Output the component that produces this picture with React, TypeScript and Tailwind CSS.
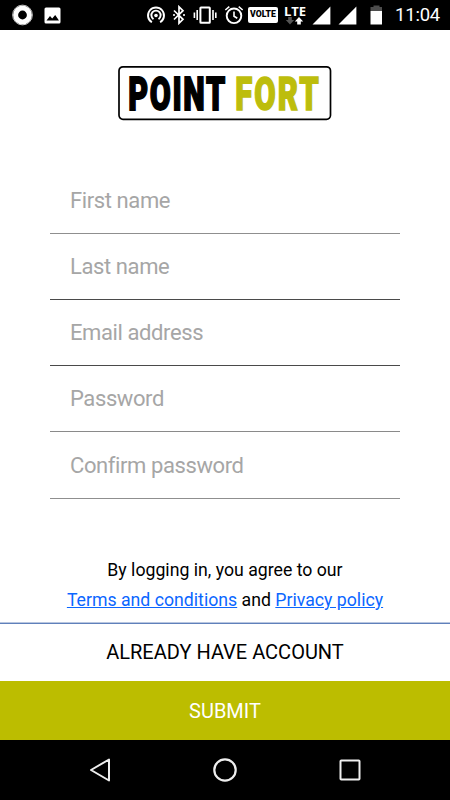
import { useState } from 'react'

const fields = [
  { name: 'firstName', label: 'First name', type: 'text', box: 'h-[66px] border-[#8f8f8f]' },
  { name: 'lastName', label: 'Last name', type: 'text', box: 'h-[66px] border-[#4a4a4a]' },
  { name: 'email', label: 'Email address', type: 'email', box: 'h-[66px] border-[#4a4a4a]' },
  { name: 'password', label: 'Password', type: 'password', box: 'h-[66px] border-[#8a8a8a]' },
  { name: 'confirm', label: 'Confirm password', type: 'password', box: 'h-[67px] border-[#8f8f8f]' }
]

function Signal() {
  return (
    <svg width="19" height="19" viewBox="0 0 19 19">
      <path d="M18.4 0.5V18.4H0.5Z" fill="#fff" />
    </svg>
  )
}

function StatusBar() {
  return (
    <div className="flex h-[30px] items-center bg-black pl-3 pr-[9px] text-white">
      <svg width="22" height="22" viewBox="0 0 22 22">
        <circle cx="10.5" cy="11" r="9.9" fill="none" stroke="#bbb" strokeWidth="1" />
        <circle cx="10.5" cy="11" r="6.9" fill="none" stroke="#fff" strokeWidth="5" />
      </svg>
      <svg className="ml-[10px]" width="17" height="17" viewBox="0 0 17 17">
        <rect x="0.5" y="0.5" width="16" height="16" rx="1.5" fill="#fff" />
        <path d="M2.5 13.5 6 9l2.2 2.6L11.2 8l3.8 5.5Z" fill="#000" />
      </svg>

      <div className="ml-auto flex items-center">
        {/* hotspot */}
        <svg width="20" height="20" viewBox="0 0 20 20" fill="none" stroke="#fff" strokeWidth="1.9">
          <path d="M5.9 17.3A8 8 0 1 1 14.1 17.3" />
          <path d="M7.5 14.1A4.6 4.6 0 1 1 12.5 14.1" />
          <circle cx="10" cy="10.5" r="1.8" fill="#fff" stroke="none" />
        </svg>
        {/* bluetooth */}
        <svg className="ml-[5px]" width="16" height="20" viewBox="0 0 16 20" fill="none" stroke="#fff" strokeWidth="1.7">
          <path d="M3 5.5 12 14.3 8 18.2V1.8l4 3.9L3 14.5" />
          <path d="M2.2 10h1.6M12.2 10h1.6" strokeWidth="2" />
        </svg>
        {/* vibrate */}
        <svg className="ml-[6px]" width="24" height="20" viewBox="0 0 24 20" fill="none" stroke="#fff" strokeWidth="2">
          <rect x="7.4" y="2.4" width="9.4" height="15.4" rx="0.6" />
          <path d="M4.2 5v10M1.4 7.5v5.5M20 5v10M22.8 7.5v5.5" strokeWidth="1.6" />
        </svg>
        {/* alarm */}
        <svg className="ml-[7px]" width="20" height="20" viewBox="0 0 20 20" fill="none" stroke="#fff" strokeWidth="1.9">
          <circle cx="10" cy="10.8" r="7.3" />
          <path d="M10 6.6v4.7l3.3 2M1.3 5 5.3 1.7M18.7 5l-4-3.3" strokeWidth="1.6" />
        </svg>
        <div className="ml-[4px] flex h-[16px] w-[30px] items-center justify-center rounded-[2px] bg-white font-[Roboto] text-[8.7px] font-black text-black">
          VOLTE
        </div>
        <div className="ml-[5px] flex h-[20px] w-[24px] flex-col items-center">
          <span className="font-['Open_Sans'] text-[13px] leading-[12px] font-bold">LTE</span>
          <svg className="shrink-0" width="20" height="8" viewBox="0 0 20 8">
            <path d="M3.2 0h3.6v3h2.4L5 7.5 0.8 3h2.4Z" fill="#555" />
            <path d="M12.2 7.5h3.6v-3h2.4L14 0 9.8 4.5h2.4Z" fill="#fff" />
          </svg>
        </div>
        <div className="ml-[5px]">
          <Signal />
        </div>
        <div className="ml-[7px]">
          <Signal />
        </div>
        <svg className="ml-[13px]" width="13" height="20" viewBox="0 0 13 20">
          <path d="M3.5 0.5h6V2H12v4H0.5V2h3Z" fill="#4d4d4d" />
          <path d="M0.5 6H12v13.5H0.5Z" fill="#fff" />
        </svg>
        <span className="ml-[12px] w-[46px] font-[Roboto] text-[18.5px] leading-none tracking-[-0.2px] whitespace-nowrap">11:04</span>
      </div>
    </div>
  )
}

function Logo() {
  return (
    <svg width="214" height="55" viewBox="0 0 214 55" className="overflow-visible" fontFamily="Roboto, sans-serif" fontWeight="900" fontSize="47">
      <rect x="1" y="0.8" width="211.5" height="52.5" rx="4" fill="#fff" stroke="#000" strokeWidth="1.7" />
      <text transform="translate(10.2 43.7) scale(0.65 1)" letterSpacing="2.5" fill="#000" stroke="#000" strokeWidth="1.8">POINT</text>
      <text transform="translate(117.2 43.7) scale(0.66 1)" letterSpacing="3.2" fill="#bdbd0c" stroke="#bdbd0c" strokeWidth="1.6">FORT</text>
    </svg>
  )
}

function NavBar() {
  return (
    <div className="flex h-[60px] items-center justify-between bg-black px-[88px]">
      <svg width="24" height="26" viewBox="0 0 24 26" fill="none" stroke="#eee" strokeWidth="2" strokeLinejoin="round">
        <path d="M3 13 21 2.5V23.5Z" />
      </svg>
      <svg width="26" height="26" viewBox="0 0 26 26" fill="none" stroke="#eee" strokeWidth="2.2">
        <circle cx="13" cy="13" r="10.7" />
      </svg>
      <svg width="24" height="26" viewBox="0 0 24 26" fill="none" stroke="#eee" strokeWidth="2">
        <rect x="2.5" y="3.5" width="19" height="19" rx="0.8" />
      </svg>
    </div>
  )
}

export default function App() {
  const [values, setValues] = useState<Record<string, string>>({})

  return (
    <div className="flex h-[800px] w-[450px] flex-col overflow-hidden bg-white font-[Roboto,sans-serif] text-black">
      <StatusBar />

      <div className="flex h-[593px] flex-col items-center pt-9">
        <Logo />

        <form className="mt-[47px] w-[350px]">
          {fields.map((field) => (
            <input
              key={field.name}
              type={field.type}
              placeholder={field.label}
              aria-label={field.label}
              value={values[field.name] || ''}
              onChange={(e) => setValues(prev => ({ ...prev, [field.name]: e.target.value }))}
              className={`block w-full border-b px-5 text-[22px] tracking-[-0.4px] placeholder:text-[#a6a6a6] focus:outline-none ${field.box}`}
            />
          ))}
        </form>

        <p className="mt-auto mb-[8px] text-center text-[17.7px] leading-[30px]">
          By logging in, you agree to our
          <br />
          <a href="#" className="text-[#0b66ff] underline">Terms and conditions</a>
          {' and '}
          <a href="#" className="text-[#0b66ff] underline">Privacy policy</a>
        </p>
      </div>

      <button className="h-[58px] border-t border-[#5f80bb] pb-[2px] text-[20px] shadow-[0_-1px_0_#b9c6df]">
        ALREADY HAVE ACCOUNT
      </button>
      <button className="h-[59px] bg-[#bcbd00] text-[20px] text-white">SUBMIT</button>

      <NavBar />
    </div>
  )
}
